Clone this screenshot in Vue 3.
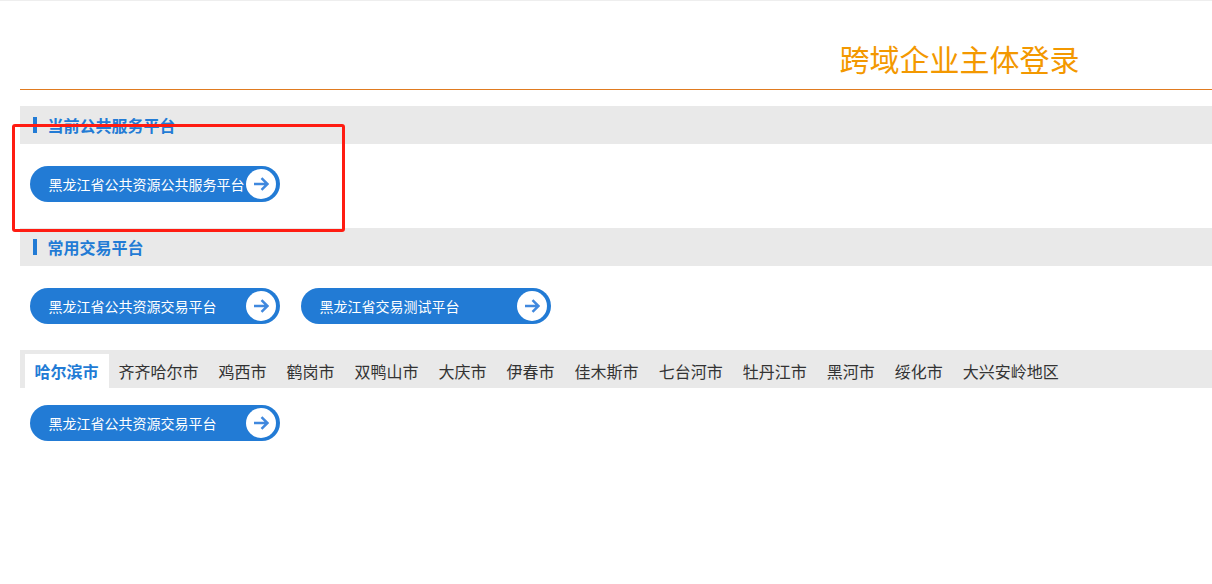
<script setup>
const cities = ['哈尔滨市','齐齐哈尔市','鸡西市','鹤岗市','双鸭山市','大庆市','伊春市','佳木斯市','七台河市','牡丹江市','黑河市','绥化市','大兴安岭地区']
const arrow = 'M1 7h13.5M8.5 1.2 14.5 7 8.5 12.8'
</script>

<template>
  <div class="page">
    <div class="top">
      <h1 class="title">跨域企业主体登录</h1>
    </div>
    <div class="bar first"><span class="mark"></span>当前公共服务平台</div>
    <div class="row">
      <a class="pill"><span class="label">黑龙江省公共资源公共服务平台</span><span class="circle"><svg width="16" height="14" viewBox="0 0 16 14"><path :d="arrow" fill="none" stroke="#4088de" stroke-width="2.5"/></svg></span></a>
    </div>
    <div class="bar"><span class="mark"></span>常用交易平台</div>
    <div class="row">
      <a class="pill"><span class="label">黑龙江省公共资源交易平台</span><span class="circle"><svg width="16" height="14" viewBox="0 0 16 14"><path :d="arrow" fill="none" stroke="#4088de" stroke-width="2.5"/></svg></span></a>
      <a class="pill"><span class="label">黑龙江省交易测试平台</span><span class="circle"><svg width="16" height="14" viewBox="0 0 16 14"><path :d="arrow" fill="none" stroke="#4088de" stroke-width="2.5"/></svg></span></a>
    </div>
    <div class="tabs">
      <span v-for="(c, i) in cities" :key="c" class="tab" :class="{ active: i === 0 }">{{ c }}</span>
    </div>
    <div class="row last">
      <a class="pill"><span class="label">黑龙江省公共资源交易平台</span><span class="circle"><svg width="16" height="14" viewBox="0 0 16 14"><path :d="arrow" fill="none" stroke="#4088de" stroke-width="2.5"/></svg></span></a>
    </div>
    <div class="annotation"></div>
  </div>
</template>

<style>
html, body { margin: 0; background: #fff; }
</style>

<style scoped>
.page {
  position: relative;
  height: 584px;
  box-sizing: border-box;
  border-top: 1px solid #eee;
  padding-left: 20px;
  overflow: hidden;
  font-family: "Noto Sans CJK SC", sans-serif;
}
.top {
  height: 88px;
  border-bottom: 1px solid #e07b20;
  display: flex;
  justify-content: flex-end;
}
.title {
  margin: 37px 132.5px 0 0;
  font-size: 30px;
  line-height: 40px;
  font-weight: 400;
  color: #f39800;
}
.bar {
  display: flex;
  align-items: center;
  height: 38px;
  background: #e9e9e9;
  padding-left: 13px;
  font-size: 16px;
  font-weight: 700;
  color: #227bd5;
}
.bar.first { margin-top: 16px; }
.mark {
  width: 4px;
  height: 16px;
  background: #227bd5;
  margin-right: 10.5px;
}
.row {
  display: flex;
  gap: 21px;
  padding: 22px 0 26px 10px;
}
.row.last { padding-top: 17px; }
.pill {
  position: relative;
  display: flex;
  align-items: center;
  box-sizing: border-box;
  width: 250px;
  height: 36px;
  padding-left: 19px;
  border-radius: 18px;
  background: #227bd5;
  color: #fff;
  font-size: 14px;
}
.label { white-space: nowrap; margin-left: -0.5px; }
.circle {
  position: absolute;
  right: 4px;
  top: 3px;
  width: 30px;
  height: 30px;
  border-radius: 50%;
  background: #fff;
  display: flex;
  align-items: center;
  justify-content: center;
}
.tabs {
  display: flex;
  height: 38px;
  background: #e9e9e9;
  padding-left: 5px;
  box-sizing: border-box;
  align-items: flex-end;
}
.tab {
  height: 34px;
  line-height: 34px;
  padding: 0 10.5px 0 9.5px;
  font-size: 16px;
  color: #333;
  white-space: nowrap;
}
.tab.active {
  background: #fff;
  color: #227bd5;
  font-weight: 700;
}
.annotation {
  position: absolute;
  left: 12px;
  top: 123px;
  width: 333px;
  height: 108px;
  box-sizing: border-box;
  border: 3px solid #ff1c12;
  border-radius: 3px;
  pointer-events: none;
}
</style>
